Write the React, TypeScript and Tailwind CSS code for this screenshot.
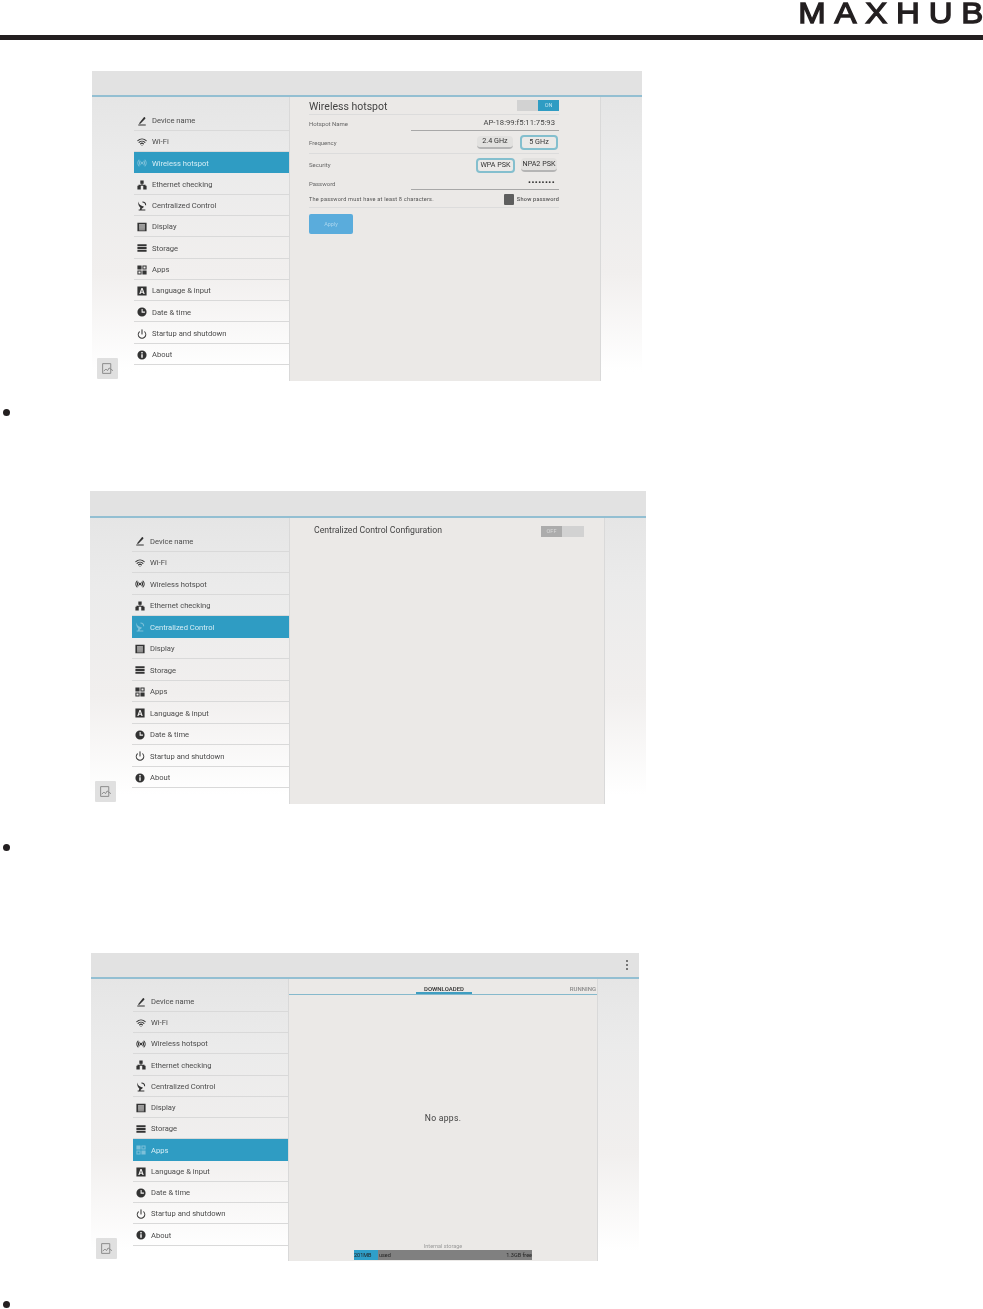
import type { ReactNode } from "react";
import { Power, Radio, Wifi } from "lucide-react";

const roboto = "font-['Roboto',sans-serif]";

function DeviceNameIcon() {
  return (
    <svg viewBox="0 0 24 24" className="h-full w-full fill-current">
      <path d="M3 20.500h18v2H3zM5 17.500 16.500 3.200a1.600 1.600 0 0 1 2.300-.1l1 1a1.600 1.600 0 0 1 0 2.200L8 18.500H5z" />
    </svg>
  );
}

function EthernetIcon() {
  return (
    <svg viewBox="0 0 24 24" className="h-full w-full fill-current">
      <path d="M8 1h8v8h-2.800v2.500h7.300V14H23v9h-8v-9h3v-.5H6v.5h3v9H1v-9h2.500v-2.500h7.300V9H8z" />
    </svg>
  );
}

function CentralizedIcon() {
  return (
    <svg viewBox="0 0 24 24" className="h-full w-full fill-current">
      <path d="M3 1c1 6 5 10 14 12.500l-4 4C6 16 2 10 3 1zM13 1a9 9 0 0 1 9 9h-2.500A6.500 6.500 0 0 0 13 3.500zM4 20.500h16V23H4zM8 15l4 1.500-1 4H7z" />
    </svg>
  );
}

function DisplayIcon() {
  return (
    <svg viewBox="0 0 24 24" className="h-full w-full fill-current">
      <path fillRule="evenodd" d="M1 2h22v20H1zM5 5v11h14V5zM5 18v1.500h14V18z" />
      <path opacity="0.45" d="M5 5h14v11H5z" />
    </svg>
  );
}

function StorageIcon() {
  return (
    <svg viewBox="0 0 24 24" className="h-full w-full fill-current">
      <path d="M1 3h22v5H1zM1 9.500h22v5H1zM1 16h22v5H1z" />
    </svg>
  );
}

function AppsIcon() {
  return (
    <svg viewBox="0 0 24 24" className="h-full w-full fill-current">
      <path fillRule="evenodd" d="M1 1h10v10H1zM13 1h10v10H13zM15.500 3.500v5h5v-5zM1 13h10v10H1zM3.500 15.500v5h5v-5zM13 13h10v10H13z" />
    </svg>
  );
}

function LanguageIcon() {
  return (
    <svg viewBox="0 0 24 24" className="h-full w-full fill-current">
      <path fillRule="evenodd" d="M1 1h22v22H1zM10.500 5 5.500 19h3l1-3h5l1 3h3L13.500 5zM12 8.500l1.700 5h-3.400z" />
    </svg>
  );
}

function ClockIcon() {
  return (
    <svg viewBox="0 0 24 24" className="h-full w-full fill-current">
      <path fillRule="evenodd" d="M12 1a11 11 0 1 1 0 22 11 11 0 0 1 0-22zM11 5v8.500h8v-2.500h-5.500V5z" />
    </svg>
  );
}

function AboutIcon() {
  return (
    <svg viewBox="0 0 24 24" className="h-full w-full fill-current">
      <path fillRule="evenodd" d="M12 1a11 11 0 1 1 0 22 11 11 0 0 1 0-22zM10.300 10v8.500h3.400V10zM10.300 5v3.200h3.400V5z" />
    </svg>
  );
}

const navItems: [string, ReactNode][] = [
  ["Device name", <DeviceNameIcon />],
  ["Wi-Fi", <Wifi className="h-full w-full" strokeWidth={2.5} />],
  ["Wireless hotspot", <Radio className="h-full w-full" strokeWidth={2.5} />],
  ["Ethernet checking", <EthernetIcon />],
  ["Centralized Control", <CentralizedIcon />],
  ["Display", <DisplayIcon />],
  ["Storage", <StorageIcon />],
  ["Apps", <AppsIcon />],
  ["Language & input", <LanguageIcon />],
  ["Date & time", <ClockIcon />],
  ["Startup and shutdown", <Power className="h-full w-full" strokeWidth={2.5} />],
  ["About", <AboutIcon />]
];

function NavRow({ label, icon, active, rowClass }: { label: string; icon: ReactNode; active: boolean; rowClass: string }) {
  return (
    <div
      className={`flex items-center border-b pl-[3px] pt-[2px] text-[7.600px] ${rowClass} ${
        active ? "border-[#2f9cc3] bg-[#2f9cc3] text-[#d5edf5]" : "border-[#d9d9d9] text-[#4c4c4c]"
      }`}
    >
      <span className={`h-[10px] w-[10px] shrink-0 ${active ? "text-[#7cc0d9]" : "text-[#333333]"}`}>{icon}</span>
      <span className="ml-[5px] whitespace-nowrap">{label}</span>
    </div>
  );
}

function ActionButton() {
  return (
    <div className="absolute bottom-[2px] left-[5px] flex h-[21px] w-[21px] items-center justify-center rounded-[1px] bg-[#e0e0e0]">
      <svg viewBox="0 0 24 24" className="h-[13px] w-[13px] fill-none stroke-[#8a8a8a]" strokeWidth="1.800">
        <path d="M3 3h15v18H3zM5 17l4-4 3 3 3-5 7 5" />
      </svg>
    </div>
  );
}

function Screen({
  active,
  shellClass,
  barClass,
  navClass,
  rowClass,
  panelClass,
  bar,
  children
}: {
  active: string;
  shellClass: string;
  barClass: string;
  navClass: string;
  rowClass: string;
  panelClass: string;
  bar?: ReactNode;
  children: ReactNode;
}) {
  return (
    <section
      className={`relative flex flex-col bg-[linear-gradient(180deg,#e3e3e3_0%,#ebebeb_30%,#f1efee_65%,#ffffff_97%)] blur-[0.45px] ${roboto} ${shellClass}`}
    >
      <div className={`flex shrink-0 items-center justify-end border-b-2 border-[#93bfd2] bg-[#e2e2e2] ${barClass}`}>{bar}</div>
      <div className="flex min-h-0 flex-1">
        <nav className={`shrink-0 ${navClass}`}>
          {navItems.map(([label, icon]) => (
            <NavRow key={label} label={label} icon={icon} active={label === active} rowClass={rowClass} />
          ))}
        </nav>
        <div className={`shrink-0 border-x border-[#d9d9d9] bg-[#ebe9e7] ${panelClass}`}>{children}</div>
      </div>
      <ActionButton />
    </section>
  );
}

function ChoiceButton({ label, selected, className }: { label: string; selected?: boolean; className: string }) {
  return (
    <span
      className={`flex items-center justify-center rounded-[4px] text-[7.200px] text-[#333333] ${className} ${
        selected ? "border-2 border-[#84bfce] bg-[#ebe9e7]" : "border-b-2 border-[#b5b5b5] bg-[#e2e1df] pt-[1px]"
      }`}
    >
      {label}
    </span>
  );
}

function HotspotPanel() {
  return (
    <div className="pl-[19px] pr-[41px]">
      <div className="flex h-[18px] items-center justify-between border-b border-[#dcdcdc]">
        <h2 className="pt-[2px] text-[10.500px] text-[#444444]">Wireless hotspot</h2>
        <div className="flex h-[11px] w-[42px] text-[5.500px]">
          <span className="flex-1 bg-[#d2d2d2]" />
          <span className="flex w-[21px] items-center justify-center bg-[#2f9cc3] text-[#bfe3ef]">ON</span>
        </div>
      </div>
      <div className="flex h-[16px] items-center justify-between text-[6px] text-[#666666]">
        <span>Hotspot Name</span>
        <span className="flex h-full w-[148px] items-center justify-end border-b border-[#a8a8a8] pr-[4px] text-[7.700px] text-[#444444]">
          AP-18:99:f5:11:75:93
        </span>
      </div>
      <div className="flex h-[23px] items-center justify-between border-b border-[#dcdcdc] text-[6px] text-[#666666]">
        <span>Frequency</span>
        <div className="flex items-center gap-[7px] pr-[1px]">
          <ChoiceButton label="2.4 GHz" className="h-[13px] w-[36px]" />
          <ChoiceButton label="5 GHz" selected className="h-[15px] w-[38px]" />
        </div>
      </div>
      <div className="flex h-[22px] items-center justify-between text-[6px] text-[#666666]">
        <span className="pb-[2px]">Security</span>
        <div className="flex items-center gap-[6px] pr-[2px]">
          <ChoiceButton label="WPA PSK" selected className="h-[15px] w-[39px]" />
          <ChoiceButton label="NPA2 PSK" className="h-[14px] w-[36px]" />
        </div>
      </div>
      <div className="flex h-[14px] items-center justify-between text-[6px] text-[#666666]">
        <span>Password</span>
        <span className="flex h-full w-[148px] items-center justify-end border-b border-[#a8a8a8] pr-[4px] text-[8px] font-bold tracking-[0.5px] text-[#333333]">
          ••••••••
        </span>
      </div>
      <div className="flex h-[18px] items-center justify-between border-b border-[#dcdcdc] pt-[1px] text-[5.600px] tracking-[0.2px] text-[#555555]">
        <span>The password must have at least 8 characters.</span>
        <span className="flex items-center gap-[3px] font-medium">
          <span className="h-[11px] w-[10px] rounded-[1px] bg-[#5e5e5e]" />
          Show password
        </span>
      </div>
      <button className="mt-[6px] h-[20px] w-[44px] rounded-[2px] bg-[#5aacdc] text-[5.500px] text-[#a9d5ee]" type="button">
        Apply
      </button>
    </div>
  );
}

function CentralizedPanel() {
  return (
    <div className="flex items-center justify-between pl-[24px] pr-[20px] pt-[7px]">
      <h2 className="mt-[-1px] text-[8.700px] text-[#444444]">Centralized Control Configuration</h2>
      <div className="flex h-[11px] w-[43px] text-[5.500px]">
        <span className="flex w-[21px] items-center justify-center bg-[#acacac] text-[#d8d8d8]">OFF</span>
        <span className="flex-1 bg-[#d2d2d2]" />
      </div>
    </div>
  );
}

function AppsPanel() {
  return (
    <div className="flex h-full flex-col">
      <div className="flex h-[16px] shrink-0 items-center border-b border-[#86b9cc] pl-[1px] pr-[1px] text-[6px] font-medium">
        <span className="ml-[126px] w-[56px] self-stretch border-b-2 border-[#3f9dc0] pt-[5px] text-center font-semibold text-[#3a3a3a]">DOWNLOADED</span>
        <span className="ml-auto self-stretch pt-[5px] text-[#8a8a8a]">RUNNING</span>
      </div>
      <div className="flex flex-1 items-center justify-center text-[8.600px] tracking-[0.3px] text-[#3d3d3d]">No apps.</div>
      <div className="shrink-0 pb-[1px] text-center text-[5.500px]">
        <p className="text-[#9b9b9b]">Internal storage</p>
        <div className="mx-auto flex h-[10px] w-[178px] items-center justify-between bg-[#808080] text-[#222222]">
          <div className="flex h-full items-center">
            <span className="flex h-full w-[24px] items-center bg-[#2f9fc9]">201MB</span>
            <span className="ml-[1px]">used</span>
          </div>
          <span>1.3GB free</span>
        </div>
      </div>
    </div>
  );
}

function Bullet({ className }: { className: string }) {
  return <div className={`ml-[3px] h-[7px] w-[7px] rounded-full bg-[#231f20] ${className}`} />;
}

export default function App() {
  return (
    <div className="h-[1309px] w-[983px] overflow-hidden bg-white">
      <header className="flex h-[35px] items-start justify-end">
        <span className="origin-right scale-x-110 whitespace-nowrap font-['Liberation_Sans',sans-serif] text-[30px] leading-[25px] tracking-[8px] text-[#231f20] [-webkit-text-stroke:1.300px_#231f20]">
          MAXHU<span className="tracking-normal">B</span>
        </span>
      </header>
      <div className="h-[5px] bg-[#231f20]" />

      <div className="ml-[92px] mt-[31px]">
        <Screen
          active="Wireless hotspot"
          shellClass="h-[310px] w-[550px]"
          barClass="h-[26px]"
          navClass="ml-[42px] w-[155px] pt-[12.500px]"
          rowClass="h-[21.300px]"
          panelClass="w-[312px]"
        >
          <HotspotPanel />
        </Screen>
      </div>
      <Bullet className="mt-[28px]" />

      <div className="ml-[90px] mt-[75px]">
        <Screen
          active="Centralized Control"
          shellClass="h-[313px] w-[556px]"
          barClass="h-[27px]"
          navClass="ml-[42px] w-[157px] pt-[12px]"
          rowClass="h-[21.500px]"
          panelClass="w-[316px]"
        >
          <CentralizedPanel />
        </Screen>
      </div>
      <Bullet className="mt-[40px]" />

      <div className="ml-[91px] mt-[102px]">
        <Screen
          active="Apps"
          shellClass="h-[308px] w-[548px]"
          barClass="h-[26px]"
          navClass="ml-[42px] w-[155px] pt-[11.500px]"
          rowClass="h-[21.250px]"
          panelClass="w-[310px]"
          bar={
            <div className="mr-[11px] flex flex-col gap-[2px]">
              <span className="h-[2px] w-[2px] bg-[#777777]" />
              <span className="h-[2px] w-[2px] bg-[#777777]" />
              <span className="h-[2px] w-[2px] bg-[#777777]" />
            </div>
          }
        >
          <AppsPanel />
        </Screen>
      </div>
      <Bullet className="mt-[40px]" />
    </div>
  );
}
